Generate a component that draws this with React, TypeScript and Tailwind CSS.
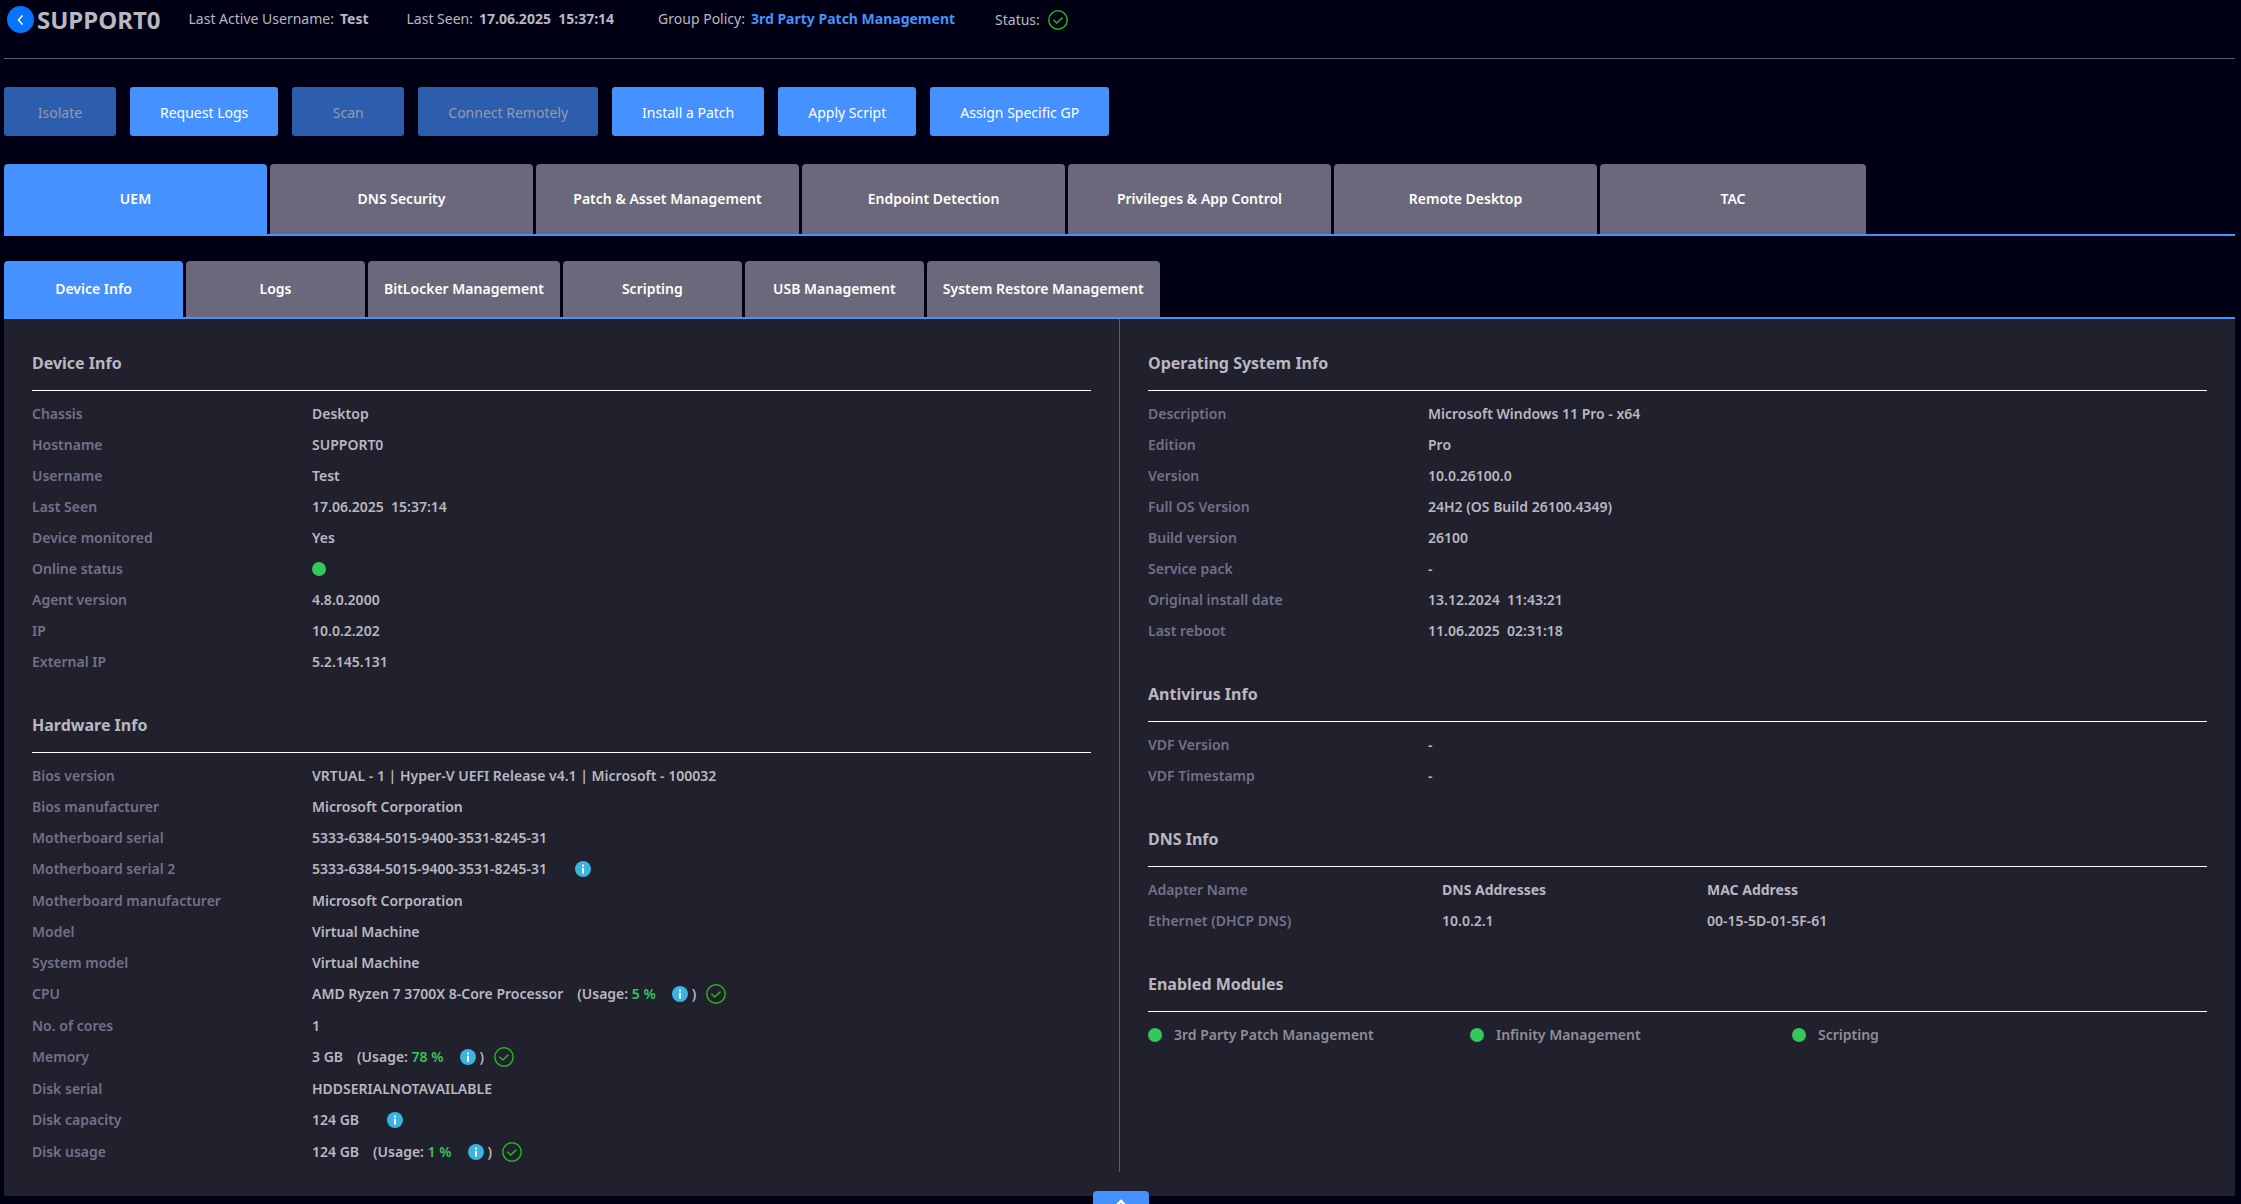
import { useState, type ReactNode } from "react";

interface Action {
  label: string;
  disabled?: boolean;
}

const ACTIONS: Action[] = [
  { label: "Isolate", disabled: true },
  { label: "Request Logs" },
  { label: "Scan", disabled: true },
  { label: "Connect Remotely", disabled: true },
  { label: "Install a Patch" },
  { label: "Apply Script" },
  { label: "Assign Specific GP" },
];

const MAIN_TABS = [
  "UEM",
  "DNS Security",
  "Patch & Asset Management",
  "Endpoint Detection",
  "Privileges & App Control",
  "Remote Desktop",
  "TAC",
];

const SUB_TABS = [
  "Device Info",
  "Logs",
  "BitLocker Management",
  "Scripting",
  "USB Management",
  "System Restore Management",
];

const MODULES = ["3rd Party Patch Management", "Infinity Management", "Scripting"];

function CheckIcon() {
  return (
    <svg viewBox="0 0 20 20" className="size-5 shrink-0" fill="none" stroke="#27b31f" strokeWidth="1.5">
      <circle cx="10" cy="10" r="9.2" />
      <path d="M5.4 9.8l3.3 3.2 5.8-5.4" />
    </svg>
  );
}

function InfoIcon() {
  return (
    <svg viewBox="0 0 16 16" className="size-4 shrink-0">
      <circle cx="8" cy="8" r="8" fill="#39b5e0" />
      <rect x="7" y="3.6" width="2" height="1.9" fill="#fff" />
      <rect x="7" y="6.8" width="2" height="5.8" fill="#fff" />
    </svg>
  );
}

function Dot() {
  return <span className="block size-3.5 shrink-0 rounded-full bg-[#34c759]" />;
}

function Usage({ value }: { value: string }) {
  return (
    <span className="ml-3.5 flex items-center">
      <span className="whitespace-pre">
        (Usage: <span className="text-[#34c759]">{value}</span>
      </span>
      <span className="mr-1 ml-4">
        <InfoIcon />
      </span>
      )
      <span className="ml-2.5">
        <CheckIcon />
      </span>
    </span>
  );
}

function Section({ title, children }: { title: string; children: ReactNode }) {
  return (
    <section>
      <h2 className="mb-[7px] border-b border-white pb-[15px] text-base leading-6 font-bold">{title}</h2>
      {children}
    </section>
  );
}

interface RowProps {
  label: string;
  withIcon?: boolean;
  children: ReactNode;
}

function Row({ label, withIcon, children }: RowProps) {
  return (
    <div className={`flex items-center ${withIcon ? "h-8" : "h-[31px]"}`}>
      <dt className="w-[280px] shrink-0 text-[#737189]">{label}</dt>
      <dd className="flex items-center whitespace-pre">{children}</dd>
    </div>
  );
}

export default function App() {
  const [mainTab, setMainTab] = useState("UEM");
  const [subTab, setSubTab] = useState("Device Info");

  return (
    <div className="relative h-screen overflow-hidden bg-[#000014] pr-1.5 pl-1 font-['Noto_Sans',sans-serif] text-sm text-[#b9b8c0]">
      <header className="flex h-[59px] items-start border-b border-[#5f5d70]">
        <div className="flex h-[39px] items-center">
          <button
            type="button"
            aria-label="Back"
            className="ml-[3px] flex size-[27px] items-center justify-center rounded-full bg-[#0773ff]"
          >
            <svg viewBox="0 0 12 12" className="size-3" fill="none" stroke="#fff" strokeWidth="1.5">
              <path d="M7.5 1.5L3.5 6l4 4.5" />
            </svg>
          </button>
          <h1 className="ml-[3px] text-2xl font-bold">SUPPORT0</h1>
          <p className="ml-7 flex gap-1.5 pb-0.5">
            Last Active Username: <b>Test</b>
          </p>
          <p className="ml-[38px] flex gap-1.5 pb-0.5">
            Last Seen: <b className="whitespace-pre">17.06.2025  15:37:14</b>
          </p>
          <p className="ml-11 flex gap-1.5 pb-0.5">
            Group Policy:
            <a href="#policy" className="font-bold text-[#4591ff]">
              3rd Party Patch Management
            </a>
          </p>
          <p className="ml-10 flex items-center gap-2">
            Status: <CheckIcon />
          </p>
        </div>
      </header>

      <div className="mt-7 flex gap-3.5">
        {ACTIONS.map(({ label, disabled }) => (
          <button
            key={label}
            type="button"
            disabled={disabled}
            className={`h-[49px] min-w-28 rounded-[3px] px-[30px] pt-0.5 ${
              disabled ? "bg-[#2d5eae] text-[#969aa8]" : "bg-[#4591ff] text-white"
            }`}
          >
            {label}
          </button>
        ))}
      </div>

      <nav className="mt-7 flex gap-[3px] border-b-2 border-[#4591ff] font-semibold text-white">
        {MAIN_TABS.map((tab) => (
          <button
            key={tab}
            type="button"
            onClick={() => setMainTab(tab)}
            className={`h-[70px] w-[263px] rounded-t-[4px] last:w-[266px] ${
              tab === mainTab ? "bg-[#4591ff]" : "bg-[#6a687a]"
            }`}
          >
            {tab}
          </button>
        ))}
      </nav>

      <nav className="mt-[25px] flex gap-[3px] border-b-2 border-[#4591ff] font-semibold text-white">
        {SUB_TABS.map((tab) => (
          <button
            key={tab}
            type="button"
            onClick={() => setSubTab(tab)}
            className={`h-14 min-w-[179px] rounded-t-[4px] px-4 ${tab === subTab ? "bg-[#4591ff]" : "bg-[#6a687a]"}`}
          >
            {tab}
          </button>
        ))}
      </nav>

      <main className="flex bg-[#21202d] pb-6 font-semibold">
        <div className="flex min-w-0 flex-1 flex-col gap-9 px-7 pt-8 pb-1">
          <Section title="Device Info">
            <dl>
              <Row label="Chassis">Desktop</Row>
              <Row label="Hostname">SUPPORT0</Row>
              <Row label="Username">Test</Row>
              <Row label="Last Seen">17.06.2025  15:37:14</Row>
              <Row label="Device monitored">Yes</Row>
              <Row label="Online status">
                <Dot />
              </Row>
              <Row label="Agent version">4.8.0.2000</Row>
              <Row label="IP">10.0.2.202</Row>
              <Row label="External IP">5.2.145.131</Row>
            </dl>
          </Section>

          <Section title="Hardware Info">
            <dl>
              <Row label="Bios version">VRTUAL - 1 | Hyper-V UEFI Release v4.1 | Microsoft - 100032</Row>
              <Row label="Bios manufacturer">Microsoft Corporation</Row>
              <Row label="Motherboard serial">5333-6384-5015-9400-3531-8245-31</Row>
              <Row label="Motherboard serial 2" withIcon>
                <span className="mr-7">5333-6384-5015-9400-3531-8245-31</span>
                <InfoIcon />
              </Row>
              <Row label="Motherboard manufacturer">Microsoft Corporation</Row>
              <Row label="Model">Virtual Machine</Row>
              <Row label="System model">Virtual Machine</Row>
              <Row label="CPU" withIcon>
                AMD Ryzen 7 3700X 8-Core Processor
                <Usage value="5 %" />
              </Row>
              <Row label="No. of cores">1</Row>
              <Row label="Memory" withIcon>
                3 GB
                <Usage value="78 %" />
              </Row>
              <Row label="Disk serial">HDDSERIALNOTAVAILABLE</Row>
              <Row label="Disk capacity" withIcon>
                <span className="mr-7">124 GB</span>
                <InfoIcon />
              </Row>
              <Row label="Disk usage" withIcon>
                124 GB
                <Usage value="1 %" />
              </Row>
            </dl>
          </Section>
        </div>

        <div className="w-px bg-[#5f5d6a]" />

        <div className="flex min-w-0 flex-1 flex-col gap-9 px-7 pt-8">
          <Section title="Operating System Info">
            <dl>
              <Row label="Description">Microsoft Windows 11 Pro - x64</Row>
              <Row label="Edition">Pro</Row>
              <Row label="Version">10.0.26100.0</Row>
              <Row label="Full OS Version">24H2 (OS Build 26100.4349)</Row>
              <Row label="Build version">26100</Row>
              <Row label="Service pack">-</Row>
              <Row label="Original install date">13.12.2024  11:43:21</Row>
              <Row label="Last reboot">11.06.2025  02:31:18</Row>
            </dl>
          </Section>

          <Section title="Antivirus Info">
            <dl>
              <Row label="VDF Version">-</Row>
              <Row label="VDF Timestamp">-</Row>
            </dl>
          </Section>

          <Section title="DNS Info">
            <table className="w-full table-fixed text-left">
              <thead>
                <tr className="h-[31px]">
                  <th className="w-[294px] font-semibold text-[#737189]">Adapter Name</th>
                  <th className="w-[265px] font-bold">DNS Addresses</th>
                  <th className="font-bold">MAC Address</th>
                </tr>
              </thead>
              <tbody>
                <tr className="h-[31px]">
                  <td className="text-[#737189]">Ethernet (DHCP DNS)</td>
                  <td>10.0.2.1</td>
                  <td>00-15-5D-01-5F-61</td>
                </tr>
              </tbody>
            </table>
          </Section>

          <Section title="Enabled Modules">
            <ul className="flex text-[#8f8e96]">
              {MODULES.map((name) => (
                <li key={name} className="flex h-[31px] w-[322px] items-center gap-3">
                  <Dot />
                  {name}
                </li>
              ))}
            </ul>
          </Section>
        </div>
      </main>

      {/* expand handle, sits over the panel's bottom edge */}
      <button
        type="button"
        aria-label="Expand"
        className="absolute -bottom-5 left-1/2 flex h-[33px] w-14 -translate-x-1/2 items-start justify-center rounded-[4px] bg-[#4591ff] pt-2"
      >
        <svg viewBox="0 0 16 10" className="h-2.5 w-4" fill="none" stroke="#fff" strokeWidth="2.5">
          <path d="M2 8l6-6 6 6" />
        </svg>
      </button>
    </div>
  );
}
